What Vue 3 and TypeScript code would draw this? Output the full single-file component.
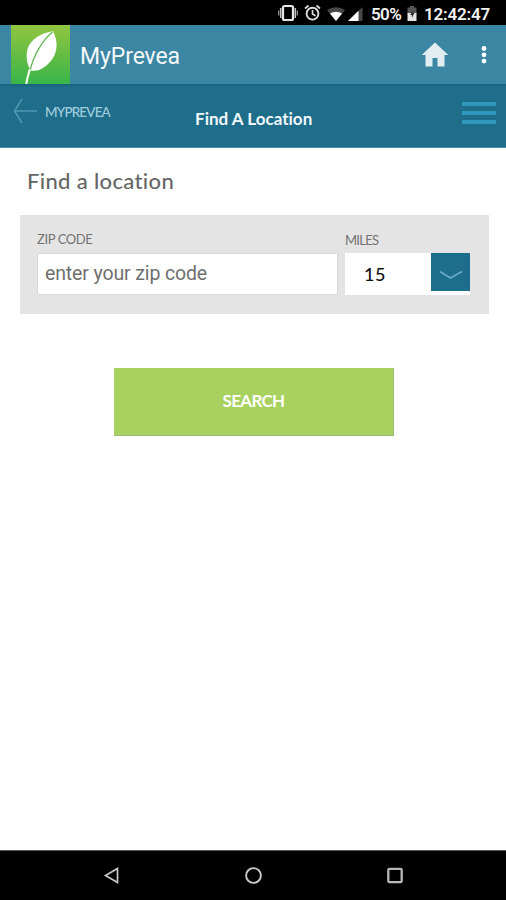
<script setup lang="ts">
import { ref } from 'vue'

const zip = ref('')
const miles = ref(15)
</script>

<template>
  <div class="screen">
    <header class="status">
      <svg class="vibrate" width="20" height="18" viewBox="0 0 20 18">
        <rect x="5" y="2" width="10" height="14" rx="1.5" fill="none" stroke="#e6e6e6" stroke-width="2.2" />
        <path d="M2.7 4v10M17.3 4v10" stroke="#c4c4c4" stroke-width="1.5" />
        <path d="M.7 6.500v5M19.300 6.500v5" stroke="#929292" stroke-width="1.300" />
      </svg>
      <svg class="alarm" width="17" height="18" viewBox="0 0 17 18">
        <circle cx="8.500" cy="9.700" r="5.900" fill="none" stroke="#dedede" stroke-width="1.900" />
        <path d="M8.500 6v4l3 1.700M1 4.500l3.500-3M16 4.500l-3.500-3" fill="none" stroke="#dedede" stroke-width="1.700" />
      </svg>
      <svg class="wifi" width="18" height="14" viewBox="0 0 18 14">
        <path d="M0 3Q9-2.500 18 3L9 14Z" fill="#484848" />
        <path d="M3 6.500Q9 2.800 15 6.500L9 14Z" fill="#fff" />
      </svg>
      <svg class="signal" width="15" height="14" viewBox="0 0 15 14">
        <path d="M0 14L14.500 0v14Z" fill="#484848" />
        <path d="M0 14L10.500 3.800V14Z" fill="#fff" />
      </svg>
      <span class="percent">50%</span>
      <svg class="battery" width="10" height="15" viewBox="0 0 10 15">
        <path d="M3 0h4v1.500h2.500V8h-9V1.500H3Z" fill="#555" />
        <path d="M.5 7h9v8h-9Z" fill="#e5e5e5" />
        <path d="M5.700 4L3.200 9h1.700v3l2.500-5H5.700Z" fill="#2b2b2b" />
      </svg>
      <span class="clock">12:42:47</span>
    </header>

    <div class="appbar">
      <svg class="logo" width="59" height="59" viewBox="0 0 59 59">
        <defs>
          <linearGradient id="leaf-bg" x1="0" y1="0" x2="0" y2="1">
            <stop offset="0" stop-color="#91c540" />
            <stop offset="1" stop-color="#39b549" />
          </linearGradient>
        </defs>
        <rect width="59" height="59" fill="url(#leaf-bg)" />
        <path d="M42 6.300C31 8 20 13.500 16.500 24C14.500 32 16 40 20 45.500C28 47 36 42 42 33C47.500 24 46 14 42 6.300Z" fill="#fff" />
        <path d="M41.500 7C33 14 23 28 19 46" fill="none" stroke="#62b756" stroke-width="1.300" />
        <path d="M19 44C17.500 49 16 53 15.300 59" fill="none" stroke="#eff8e9" stroke-width="2.200" />
      </svg>
      <h1>MyPrevea</h1>
      <svg class="home" width="28" height="25" viewBox="0 0 28 25">
        <path d="M14 .5L.7 13h3.800v11.500h7V16h5v8.500h7V13h3.800Z" fill="#e1edf1" />
      </svg>
      <svg class="dots" width="6" height="20" viewBox="0 0 6 20">
        <circle cx="3" cy="3.500" r="2.400" fill="#fff" />
        <circle cx="3" cy="9.800" r="2.400" fill="#fff" />
        <circle cx="3" cy="16.100" r="2.400" fill="#fff" />
      </svg>
    </div>

    <nav class="subbar">
      <div class="back">
        <svg width="25" height="26" viewBox="0 0 25 26">
          <path d="M9 1L1.500 13L9 25M1.500 13H24" fill="none" stroke="#5197b2" stroke-width="1.500" />
        </svg>
        <span>MYPREVEA</span>
      </div>
      <h2>Find A Location</h2>
      <div class="menu"><i></i><i></i><i></i></div>
    </nav>

    <main>
      <h3>Find a location</h3>
      <section class="panel">
        <label class="zip">
          <span>ZIP CODE</span>
          <input v-model="zip" type="text" placeholder="enter your zip code" />
        </label>
        <div class="miles">
          <span class="caption">MILES</span>
          <div class="select">
            <span class="value">{{ miles }}</span>
            <span class="drop">
              <svg width="24" height="10" viewBox="0 0 24 10">
                <path d="M1 1.500L11.500 8L23 1.500" fill="none" stroke="#68a9c4" stroke-width="1.600" />
              </svg>
            </span>
          </div>
        </div>
      </section>
      <button class="search" type="button">SEARCH</button>
    </main>

    <footer class="softkeys">
      <svg width="16" height="18" viewBox="0 0 16 18">
        <path d="M14.500 1.500v14L2.500 8.500Z" fill="none" stroke="#c8c8c8" stroke-width="1.700" />
      </svg>
      <svg width="18" height="18" viewBox="0 0 18 18">
        <circle cx="9.500" cy="8.500" r="7.400" fill="none" stroke="#cacaca" stroke-width="1.900" />
      </svg>
      <svg width="16" height="18" viewBox="0 0 16 18">
        <rect x="1.300" y="1.800" width="13.400" height="13.400" rx="1.200" fill="none" stroke="#b8b8b8" stroke-width="2.300" />
      </svg>
    </footer>
  </div>
</template>

<style>
body { margin: 0; background: #fff; }
</style>

<style scoped>
* { box-sizing: border-box; }
svg { display: block; flex: none; }
h1, h2, h3 { margin: 0; white-space: nowrap; }
.screen {
  width: 506px;
  height: 900px;
  display: flex;
  flex-direction: column;
  overflow: hidden;
  background: #fff;
  font-family: Lato, "Liberation Sans", sans-serif;
  font-variant-ligatures: none;
}
.status {
  height: 25px;
  padding: 1px 0 0 278px;
  display: flex;
  align-items: center;
  background: #000;
  color: #f2f2f2;
  font: 600 17px/22px Roboto, sans-serif;
}
.alarm { margin-left: 6px; }
.wifi { margin-left: 6px; margin-top: 2px; }
.signal { margin-left: 3px; margin-top: 2px; }
.percent { width: 32px; margin-left: 8px; padding-top: 2px; letter-spacing: -0.6px; }
.battery { margin-left: 4px; margin-top: 1px; }
.clock { margin-left: 7px; padding-top: 2px; letter-spacing: -0.2px; white-space: nowrap; }
.appbar {
  height: 59px;
  padding: 0 19px 0 11px;
  display: flex;
  align-items: center;
  background: #3b86a3;
}
.appbar h1 {
  margin: 5px auto 0 10px;
  color: #f3f8fa;
  font: 400 23px/30px Roboto, sans-serif;
  letter-spacing: -0.1px;
}
.dots { margin-left: 32px; }
.subbar {
  height: 64px;
  padding: 0 10px 0 13px;
  display: grid;
  grid-template-columns: 182px 1fr 34px;
  background: #1e6d8b;
  border-top: 2px solid #1a6481;
  border-bottom: 1px solid #4794b1;
}
.back {
  height: 26px;
  margin-top: 12px;
  display: flex;
  align-items: center;
  gap: 7px;
  color: #a0cddd;
  font-size: 13.5px;
  font-weight: 500;
}
.back span { padding-top: 2px; letter-spacing: -0.85px; }
.subbar h2 {
  margin-top: 22px;
  color: #f1f7f9;
  font-size: 17px;
  line-height: 22px;
  font-weight: 700;
  letter-spacing: 0.02px;
}
.menu {
  margin-top: 16px;
  display: flex;
  flex-direction: column;
  gap: 5px;
}
.menu i { height: 4px; background: #2f98bd; }
main { flex: 1; padding: 0 17px 0 20px; display: flex; flex-direction: column; }
main h3 {
  margin: 19px 0 0 7px;
  color: #666;
  font-size: 22px;
  font-weight: 500;
  line-height: 28px;
  letter-spacing: 0.35px;
}
.panel {
  height: 99px;
  margin-top: 20px;
  padding: 16px 19px 0 17px;
  display: grid;
  grid-template-columns: 301px 125px;
  gap: 7px;
  background: #e4e4e4;
}
.zip span, .caption {
  height: 22px;
  display: block;
  color: #737373;
  font-size: 13px;
  line-height: 17px;
  letter-spacing: -0.4px;
}
.caption { padding-top: 1px; letter-spacing: -0.7px; }
.zip input {
  width: 301px;
  height: 42px;
  display: block;
  padding: 0 7px 1px;
  border: 1px solid #dadada;
  border-radius: 0;
  outline: none;
  background: #fff;
  font: 400 19.500px/30px Roboto, sans-serif;
  letter-spacing: -0.13px;
}
.zip input::placeholder { color: #6f6f6f; opacity: 1; }
.select { height: 42px; display: flex; justify-content: space-between; background: #fff; }
.value { padding: 9px 0 0 19px; color: #111; font-size: 18px; font-weight: 500; line-height: 24px; letter-spacing: 0.5px; }
.drop {
  width: 39px;
  height: 38px;
  padding-top: 5px;
  display: flex;
  align-items: center;
  justify-content: center;
  background: #1d6e8d;
}
.search {
  width: 280px;
  height: 68px;
  margin: 54px 0 0 94px;
  padding: 0 0 3px;
  align-self: flex-start;
  border: 0;
  border-right: 1px solid #9fbb75;
  border-bottom: 1px solid #9fbb75;
  background: #a8d160;
  color: #fff;
  font-family: inherit;
  font-size: 17px;
  font-weight: 700;
  letter-spacing: -0.7px;
}
.softkeys {
  height: 50px;
  padding: 0 103px;
  display: flex;
  align-items: center;
  justify-content: space-between;
  background: #000;
  border-top: 1px solid #555;
}
</style>
